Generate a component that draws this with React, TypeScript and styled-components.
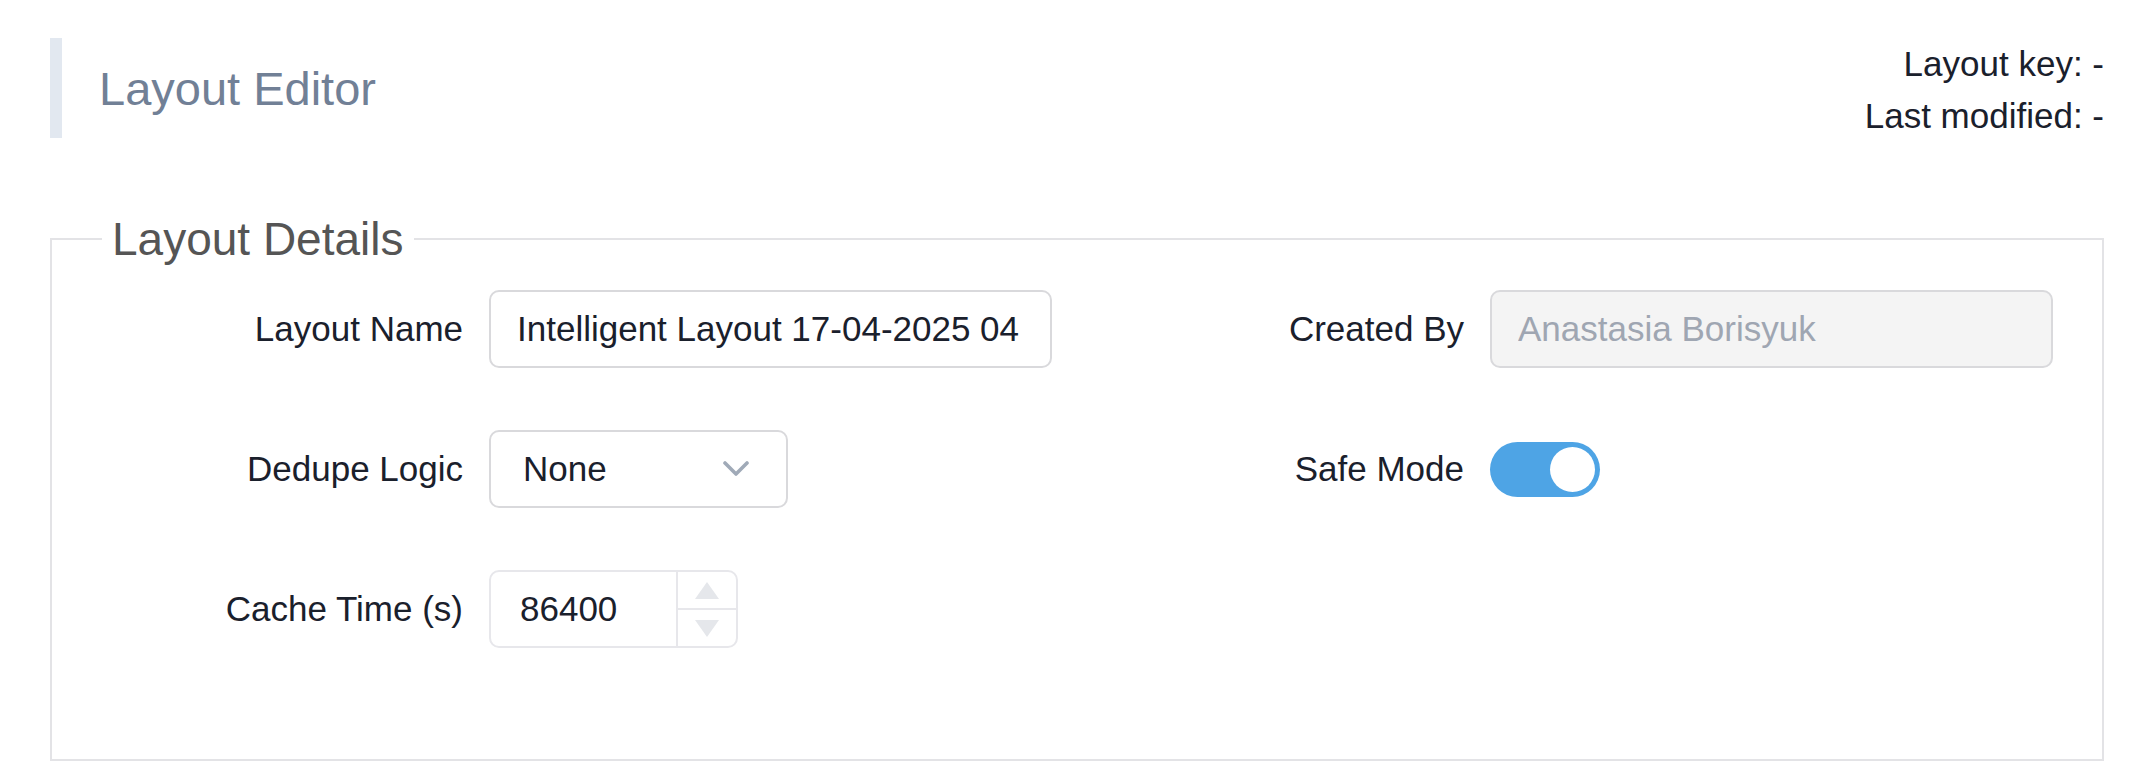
import React from "react";
import styled, { createGlobalStyle } from "styled-components";

const GlobalStyle = createGlobalStyle`
  body {
    margin: 0;
    background: #ffffff;
    font-family: "Liberation Sans", Arial, Helvetica, sans-serif;
    color: #1a202c;
  }
  * {
    box-sizing: border-box;
  }
`;

const Page = styled.div`
  padding: 38px 52px 0 50px;
`;

const Header = styled.div`
  display: flex;
  justify-content: space-between;
  align-items: flex-start;
`;

const Title = styled.h1`
  margin: 0;
  height: 100px;
  display: flex;
  align-items: center;
  border-left: 12px solid #e2e8f0;
  padding-left: 37px;
  font-size: 47px;
  font-weight: 400;
  color: #718096;
`;

const Meta = styled.div`
  text-align: right;
  font-size: 35px;
  line-height: 52px;
  color: #1a202c;
`;

const Fieldset = styled.fieldset`
  margin: 70px 0 0 0;
  border: 2px solid #e3e3e6;
  padding: 24px 40px 111px 50px;
  min-width: 0;
`;

const Legend = styled.legend`
  padding: 0 10px;
  font-size: 46px;
  color: #555555;
`;

const Grid = styled.div`
  display: grid;
  grid-template-columns: 1001px 1fr;
  row-gap: 62px;
`;

const Field = styled.div`
  display: flex;
  align-items: center;
  gap: 26px;
  height: 78px;
`;

const Label = styled.label`
  width: 361px;
  flex-shrink: 0;
  text-align: right;
  font-size: 35px;
  color: #1a202c;
`;

const TextInput = styled.input<{ $muted?: boolean }>`
  width: 563px;
  height: 78px;
  border: 2px solid #d9d9dc;
  border-radius: 10px;
  padding: 0 26px;
  font-family: inherit;
  font-size: 35px;
  outline: none;
  color: ${(p) => (p.$muted ? "#9fa6b2" : "#1a202c")};
  background: ${(p) => (p.$muted ? "#f4f4f4" : "#ffffff")};
`;

const SelectBox = styled.div`
  width: 299px;
  height: 78px;
  border: 2px solid #d9d9dc;
  border-radius: 10px;
  padding: 0 37px 0 32px;
  display: flex;
  align-items: center;
  justify-content: space-between;
  font-size: 35px;
  color: #1a202c;
  cursor: pointer;
`;

const NumberBox = styled.div`
  width: 249px;
  height: 78px;
  border: 2px solid #e7e7eb;
  border-radius: 10px;
  display: flex;
  overflow: hidden;
`;

const NumberInput = styled.input`
  flex: 1;
  min-width: 0;
  border: none;
  outline: none;
  padding: 0 0 0 29px;
  font-family: inherit;
  font-size: 35px;
  color: #1a202c;
  background: transparent;
`;

const Spinner = styled.div`
  width: 60px;
  border-left: 2px solid #e7e7eb;
  display: flex;
  flex-direction: column;
`;

const SpinButton = styled.div<{ $down?: boolean }>`
  flex: 1;
  display: flex;
  align-items: center;
  justify-content: center;
  border-top: ${(p) => (p.$down ? "2px solid #e7e7eb" : "none")};
`;

const Toggle = styled.div<{ $on: boolean }>`
  width: 110px;
  height: 55px;
  border-radius: 28px;
  padding: 5px;
  display: flex;
  justify-content: ${(p) => (p.$on ? "flex-end" : "flex-start")};
  background: ${(p) => (p.$on ? "#4ea4e5" : "#cbd5e0")};
  cursor: pointer;
`;

const Knob = styled.div`
  width: 45px;
  height: 45px;
  border-radius: 50%;
  background: #ffffff;
`;

const Chevron = () => (
  <svg width="26" height="16" viewBox="0 0 26 16" fill="none">
    <path
      d="M2 2 L13 13 L24 2"
      stroke="#a0aab8"
      strokeWidth="3.6"
      strokeLinecap="round"
      strokeLinejoin="round"
    />
  </svg>
);

const Arrow = ({ down }: { down?: boolean }) => (
  <svg width="24" height="17" viewBox="0 0 24 17">
    <path
      d={down ? "M0 0 L24 0 L12 17 Z" : "M12 0 L24 17 L0 17 Z"}
      fill="#e5e7eb"
    />
  </svg>
);

const App = () => {
  const [safeMode, setSafeMode] = React.useState(true);

  return (
    <Page>
      <GlobalStyle />
      <Header>
        <Title>Layout Editor</Title>
        <Meta>
          <div>Layout key: -</div>
          <div>Last modified: -</div>
        </Meta>
      </Header>

      <Fieldset>
        <Legend>Layout Details</Legend>
        <Grid>
          <Field>
            <Label>Layout Name</Label>
            <TextInput defaultValue="Intelligent Layout 17-04-2025 04" />
          </Field>
          <Field>
            <Label>Created By</Label>
            <TextInput $muted readOnly value="Anastasia Borisyuk" />
          </Field>

          <Field>
            <Label>Dedupe Logic</Label>
            <SelectBox>
              <span>None</span>
              <Chevron />
            </SelectBox>
          </Field>
          <Field>
            <Label>Safe Mode</Label>
            <Toggle $on={safeMode} onClick={() => setSafeMode(!safeMode)}>
              <Knob />
            </Toggle>
          </Field>

          <Field>
            <Label>Cache Time (s)</Label>
            <NumberBox>
              <NumberInput defaultValue="86400" />
              <Spinner>
                <SpinButton>
                  <Arrow />
                </SpinButton>
                <SpinButton $down>
                  <Arrow down />
                </SpinButton>
              </Spinner>
            </NumberBox>
          </Field>
        </Grid>
      </Fieldset>
    </Page>
  );
};

export default App;
